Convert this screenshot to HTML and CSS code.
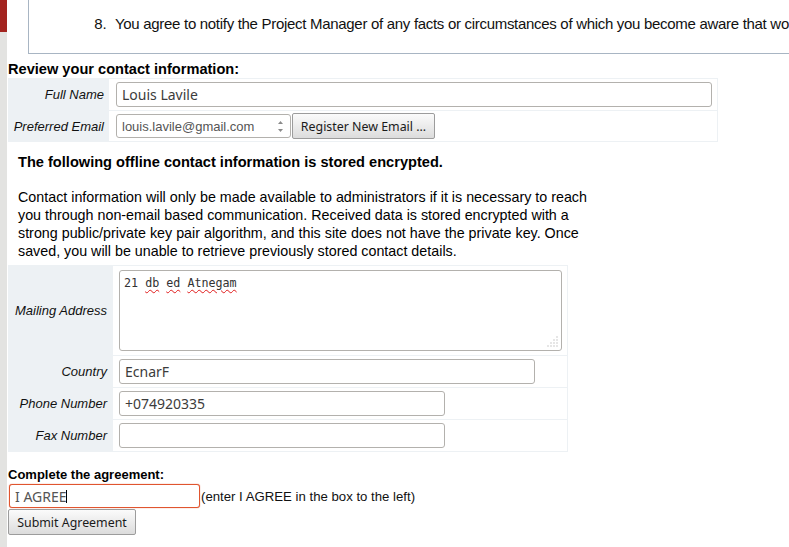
FILE: index.html
```html
<!DOCTYPE html>
<html lang="en">
<head>
<meta charset="utf-8">
<title>Agreement</title>
<link rel="stylesheet" href="styles.css">
</head>
<body>
<div class="side-window"><div class="side-window-top"></div></div>
<main class="page">
  <div class="terms">
    <ol class="terms-list" start="8">
      <li>You agree to notify the Project Manager of any facts or circumstances of which you become aware that would make your representations in this agreement inaccurate in any respect.</li>
    </ol>
  </div>

  <h3 class="section-title review-title">Review your contact information:</h3>
  <table class="form-table contact-table">
    <tr class="row-name">
      <th class="label">Full Name</th>
      <td class="field"><input class="text-input name-input" type="text" value="Louis Lavile"></td>
    </tr>
    <tr class="row-email">
      <th class="label">Preferred Email</th>
      <td class="field">
        <div class="email-controls">
          <div class="select-box">
            <span class="select-value">louis.lavile@gmail.com</span>
            <svg class="spinner" width="7" height="13" viewBox="0 0 7 13"><path d="M3.5 1 L6 4 L1 4 Z" fill="#8a8a8a"/><path d="M1 9 L6 9 L3.5 12 Z" fill="#8a8a8a"/></svg>
          </div>
          <button class="btn register-btn" type="button">Register New Email ...</button>
        </div>
      </td>
    </tr>
  </table>

  <div class="encrypted">
    <p class="enc-title">The following offline contact information is stored encrypted.</p>
    <p class="enc-text">Contact information will only be made available to administrators if it is necessary to reach you through non-email based communication. Received data is stored encrypted with a strong public/private key pair algorithm, and this site does not have the private key. Once saved, you will be unable to retrieve previously stored contact details.</p>
  </div>

  <table class="form-table offline-table">
    <tr class="row-address">
      <th class="label">Mailing Address</th>
      <td class="field">
        <div class="textarea">21 <span class="misspelled">db</span> <span class="misspelled">ed</span> <span class="misspelled">Atnegam</span><svg class="grip" width="11" height="11" viewBox="0 0 11 11"><g fill="#9a9a9a"><rect x="9.5" y="0.5" width="1" height="1"/><rect x="6.5" y="3.5" width="1" height="1"/><rect x="9.5" y="3.5" width="1" height="1"/><rect x="3.5" y="6.5" width="1" height="1"/><rect x="6.5" y="6.5" width="1" height="1"/><rect x="9.5" y="6.5" width="1" height="1"/><rect x="0.5" y="9.5" width="1" height="1"/><rect x="3.5" y="9.5" width="1" height="1"/><rect x="6.5" y="9.5" width="1" height="1"/><rect x="9.5" y="9.5" width="1" height="1"/></g></svg></div>
      </td>
    </tr>
    <tr class="row-std">
      <th class="label">Country</th>
      <td class="field"><input class="text-input country-input" type="text" value="EcnarF"></td>
    </tr>
    <tr class="row-std">
      <th class="label">Phone Number</th>
      <td class="field"><input class="text-input phone-input" type="text" value="+074920335"></td>
    </tr>
    <tr class="row-std">
      <th class="label">Fax Number</th>
      <td class="field"><input class="text-input phone-input" type="text" value=""></td>
    </tr>
  </table>

  <h4 class="section-title agree-title">Complete the agreement:</h4>
  <div class="agree-row">
    <span class="agree-input-wrap"><input class="text-input agree-input" type="text" value="I AGREE"><span class="caret"></span></span>
    <span class="agree-hint">(enter I AGREE in the box to the left)</span>
  </div>
  <button class="btn submit-btn" type="button">Submit Agreement</button>
</main>
</body>
</html>
```

FILE: styles.css
```css
* { box-sizing: border-box; }
html { overflow: hidden; }
body {
  margin: 0;
  background: #fff;
  color: #000;
  font-family: "Liberation Sans", Arial, sans-serif;
}
.side-window {
  position: fixed;
  left: 0;
  top: 0;
  bottom: 0;
  width: 7px;
  background: #e3e3e1;
}
.side-window-top { height: 32px; background: #a3241f; }

.page { padding: 0 8px; }

.terms {
  margin: 0 -400px 0 20px;
  height: 54px;
  border-left: 1px solid #a8b5c3;
  border-bottom: 1px solid #a8b5c3;
  overflow: hidden;
  white-space: nowrap;
}
.terms-list {
  margin: 0;
  padding: 14px 0 0 86px;
  font-size: 15px;
  letter-spacing: -0.3px;
  line-height: 20px;
  color: #111;
}
.terms-list li::marker { content: "8.\00a0\00a0"; letter-spacing: 0; }

.section-title { margin: 0; font-weight: bold; }
.review-title { margin-top: 7px; font-size: 14.6px; line-height: 17px; }

.form-table {
  border-collapse: separate;
  border-spacing: 1px;
  background: #edf1f4;
}
.contact-table { width: 710px; }
.offline-table { width: 560px; }

.label {
  font-weight: normal;
  font-style: italic;
  font-size: 13px;
  text-align: right;
  padding: 0 4px 0 0;
  white-space: nowrap;
  color: #111;
  vertical-align: middle;
}
.contact-table .label { width: 99px; }
.offline-table .label { width: 103px; padding-right: 5px; }

.field { background: #fff; padding: 0 0 0 7px; vertical-align: middle; }
.offline-table .field { padding-left: 6px; }

.row-name th, .row-name td { height: 31px; }
.row-email th, .row-email td { height: 30px; }
.row-address th, .row-address td { height: 89px; }
.row-std th, .row-std td { height: 31px; }

.text-input {
  display: block;
  height: 25px;
  margin: 0;
  border: 1px solid #b3b1ad;
  border-radius: 3px;
  padding: 0 5px;
  font-family: "Noto Sans", "Open Sans", sans-serif;
  font-size: 14px;
  color: #3c3c3c;
  background: #fff;
  outline: none;
}
.name-input { width: 596px; }
.country-input { width: 416px; }
.phone-input { width: 326px; }

.email-controls { display: flex; align-items: center; gap: 1px; }
.select-box {
  display: flex;
  align-items: center;
  width: 175px;
  height: 24px;
  border: 1px solid #b3b1ad;
  border-radius: 3px;
  padding: 0 6px 0 5px;
  font-size: 13px;
  color: #555;
  background: #fff;
}
.select-value { flex: 1; }
.spinner { display: block; }

.btn {
  margin: 0;
  padding: 0;
  border: 1px solid #9c9c9c;
  border-radius: 2px;
  background: linear-gradient(#fbfbfb, #dcdcdc);
  font-family: "Noto Sans", "Open Sans", sans-serif;
  font-size: 12.4px;
  color: #1a1a1a;
}
.register-btn { width: 143px; height: 26px; }

.encrypted { padding: 0 10px; }
.enc-title {
  margin: 11px 0 0;
  font-weight: bold;
  font-size: 14.6px;
  line-height: 18px;
}
.enc-text {
  margin: 17px 0 5px;
  max-width: 580px;
  font-size: 14.3px;
  line-height: 18px;
}

.textarea {
  position: relative;
  width: 443px;
  height: 81px;
  border: 1px solid #b3b1ad;
  border-radius: 3px;
  padding: 5px 5px 0 4px;
  font-family: "DejaVu Sans Mono", monospace;
  font-size: 11.7px;
  color: #333;
  background: #fff;
}
.misspelled {
  text-decoration: underline wavy #e01b1b;
  text-decoration-thickness: 1px;
  text-underline-offset: 2px;
}
.grip { position: absolute; right: 3px; bottom: 3px; }

.agree-title { margin-top: 15px; font-size: 13px; line-height: 15px; }
.agree-row { display: flex; align-items: center; margin-top: 2px; }
.agree-input-wrap { position: relative; margin-left: 1px; }
.agree-input {
  width: 191px;
  height: 24px;
  border-color: #e0552f;
  box-shadow: 0 0 1px #e0552f;
  color: #555;
}
.caret {
  position: absolute;
  left: 57px;
  top: 6px;
  width: 1px;
  height: 13px;
  background: #000;
}
.agree-hint { margin-left: 1px; font-size: 13.2px; color: #111; }

.submit-btn { display: block; margin-top: 1px; width: 128px; height: 26px; }
```
